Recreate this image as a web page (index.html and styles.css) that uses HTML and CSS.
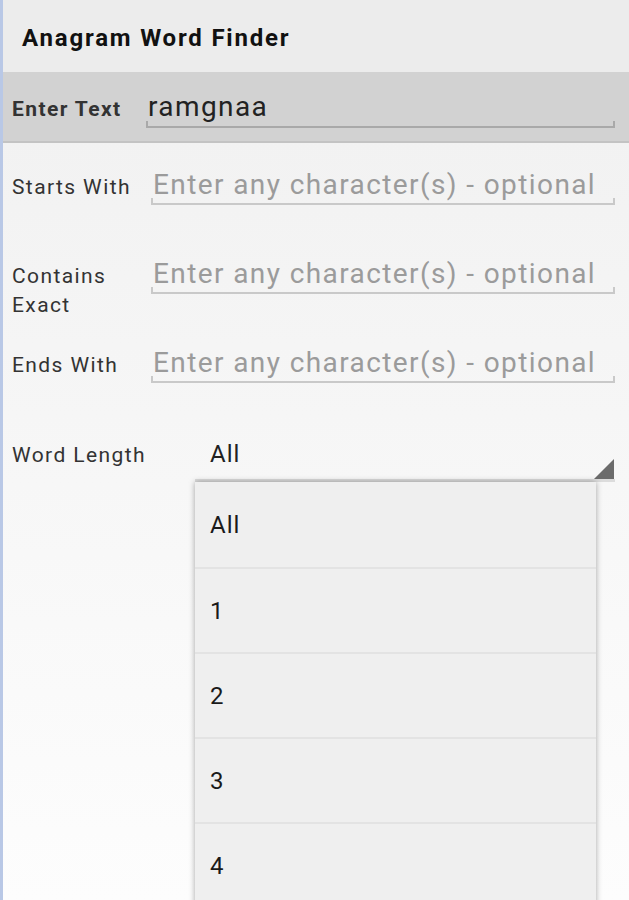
FILE: index.html
```html
<!DOCTYPE html>
<html>
<head>
<meta charset="utf-8">
<link rel="stylesheet" href="styles.css">
</head>
<body>
<div class="app">
  <header class="title-bar">Anagram Word Finder</header>
  <div class="enter-row">
    <span class="enter-label">Enter Text</span>
    <div class="field field-main">ramgnaa</div>
  </div>
  <div class="form">
    <div class="row">
      <span class="label">Starts With</span>
      <div class="field placeholder">Enter any character(s) - optional</div>
    </div>
    <div class="row">
      <span class="label">Contains<br>Exact</span>
      <div class="field placeholder">Enter any character(s) - optional</div>
    </div>
    <div class="row">
      <span class="label">Ends With</span>
      <div class="field placeholder">Enter any character(s) - optional</div>
    </div>
    <div class="row row-spinner">
      <span class="label">Word Length</span>
      <div class="spinner">
        <span class="spinner-value">All</span>
        <span class="spinner-arrow"></span>
      </div>
    </div>
  </div>
  <ul class="dropdown">
    <li>All</li>
    <li>1</li>
    <li>2</li>
    <li>3</li>
    <li>4</li>
  </ul>
</div>
</body>
</html>
```
FILE: styles.css
```css
html, body {
  margin: 0;
  padding: 0;
  height: 100%;
}
body {
  font-family: Roboto, "Liberation Sans", sans-serif;
  background: linear-gradient(#f0f0f0, #fdfdfd);
  overflow: hidden;
}
.app {
  position: relative;
  height: 900px;
  border-left: 3px solid #b9c8e6;
  box-sizing: border-box;
}
.title-bar {
  height: 72px;
  background: #ececec;
  display: flex;
  align-items: center;
  padding-left: 19px;
  font-size: 24px;
  font-weight: bold;
  letter-spacing: 1.8px;
  color: #111;
  padding-top: 4px;
  box-sizing: border-box;
}
.enter-row {
  height: 71px;
  background: #d2d2d2;
  border-bottom: 2px solid #c3c3c3;
  display: flex;
  align-items: baseline;
  padding: 18px 14px 0 9px;
  box-sizing: border-box;
}
.enter-label {
  width: 134px;
  flex: none;
  font-size: 21px;
  font-weight: bold;
  letter-spacing: 1.4px;
  color: #333;
}
.field {
  flex: 1;
  position: relative;
  font-size: 28px;
  line-height: 34px;
  height: 35px;
  border-bottom: 2px solid #c9c9c9;
  padding-left: 2px;
  white-space: nowrap;
  letter-spacing: 1.4px;
}
.field::before, .field::after {
  content: "";
  position: absolute;
  bottom: 0;
  width: 2px;
  height: 5px;
  background: #c9c9c9;
}
.field::before { left: 0; }
.field::after { right: 0; }
.field-main {
  color: #222;
  border-bottom-color: #a9a9a9;
  height: 36px;
}
.field-main::before, .field-main::after { background: #a9a9a9; }
.placeholder {
  color: #9b9b9b;
}
.form {
  padding: 25px 14px 0 9px;
}
.row {
  display: flex;
  align-items: baseline;
  height: 89px;
}
.label {
  width: 139px;
  flex: none;
  font-size: 21px;
  line-height: 29px;
  letter-spacing: 1.4px;
  color: #333;
}
.row-spinner .label {
  width: 183px;
}
.spinner {
  flex: 1;
  position: relative;
  height: 42px;
  border-bottom: 3px solid #dcdcdc;
  padding-left: 15px;
  font-size: 24px;
  line-height: 34px;
  letter-spacing: 1px;
  color: #222;
  margin-top: 2px;
}
.spinner-arrow {
  position: absolute;
  right: 1px;
  bottom: 0;
  width: 0;
  height: 0;
  border-style: solid;
  border-width: 0 0 20px 20px;
  border-color: transparent transparent #6b6b6b transparent;
}
.dropdown {
  position: absolute;
  left: 192px;
  top: 482px;
  width: 401px;
  margin: 0;
  padding: 0;
  list-style: none;
  background: #efefef;
  box-shadow: 0 0 6px rgba(0,0,0,0.35);
}
.dropdown li {
  height: 85px;
  border-bottom: 2px solid #e3e3e3;
  box-sizing: border-box;
  display: flex;
  align-items: center;
  padding-left: 15px;
  font-size: 24px;
  letter-spacing: 1px;
  color: #1a1a1a;
}
.dropdown li:first-child {
  height: 87px;
}
```
